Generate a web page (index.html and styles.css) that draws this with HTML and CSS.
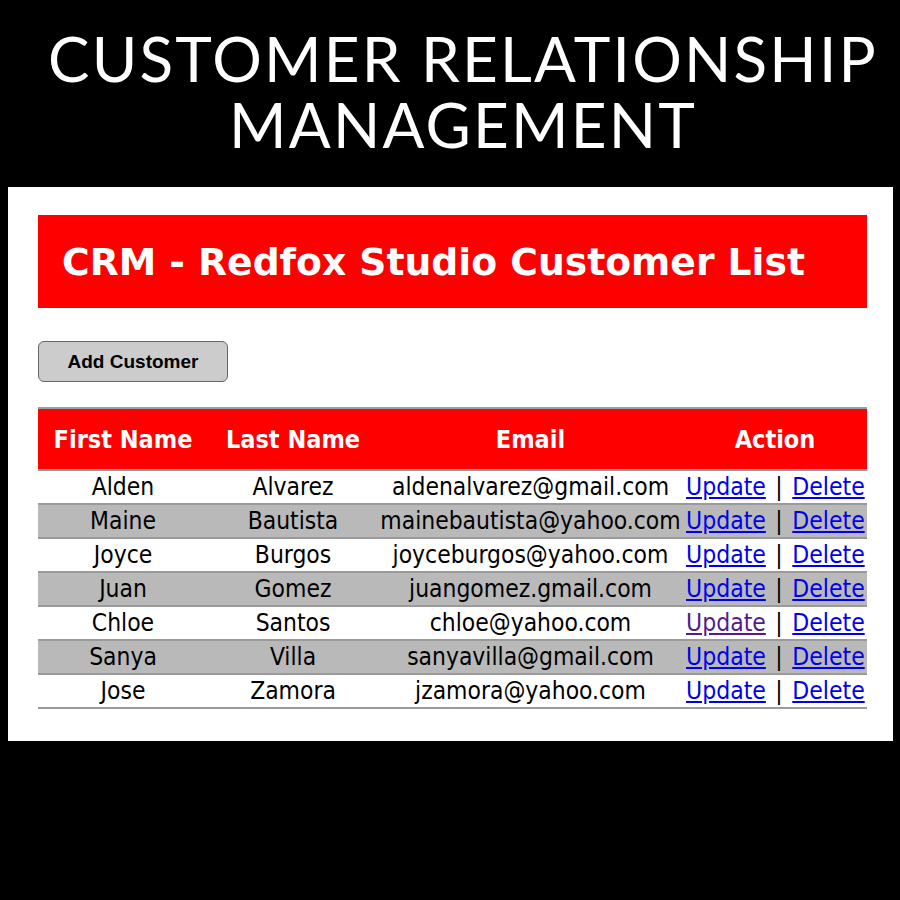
FILE: index.html
```html
<!DOCTYPE html>
<html>
<head>
<meta charset="utf-8">
<link rel="stylesheet" href="styles.css">
</head>
<body>
<div class="page">
  <h1 class="hero"><span class="hero-line">CUSTOMER RELATIONSHIP</span><span class="hero-line">MANAGEMENT</span></h1>
  <div class="panel">
    <div class="banner"><h2>CRM - Redfox Studio Customer List</h2></div>
    <button class="add-btn">Add Customer</button>
    <table class="list">
      <colgroup>
        <col class="c1"><col class="c2"><col class="c3"><col class="c4">
      </colgroup>
      <thead>
        <tr><th>First Name</th><th>Last Name</th><th>Email</th><th>Action</th></tr>
      </thead>
      <tbody>
        <tr><td>Alden</td><td>Alvarez</td><td>aldenalvarez@gmail.com</td><td class="act"><a href="#u1">Update</a> | <a href="#d1">Delete</a></td></tr>
        <tr class="alt"><td>Maine</td><td>Bautista</td><td>mainebautista@yahoo.com</td><td class="act"><a href="#u2">Update</a> | <a href="#d2">Delete</a></td></tr>
        <tr><td>Joyce</td><td>Burgos</td><td>joyceburgos@yahoo.com</td><td class="act"><a href="#u3">Update</a> | <a href="#d3">Delete</a></td></tr>
        <tr class="alt"><td>Juan</td><td>Gomez</td><td>juangomez.gmail.com</td><td class="act"><a href="#u4">Update</a> | <a href="#d4">Delete</a></td></tr>
        <tr><td>Chloe</td><td>Santos</td><td>chloe@yahoo.com</td><td class="act"><a class="visited" href="#u5">Update</a> | <a href="#d5">Delete</a></td></tr>
        <tr class="alt"><td>Sanya</td><td>Villa</td><td>sanyavilla@gmail.com</td><td class="act"><a href="#u6">Update</a> | <a href="#d6">Delete</a></td></tr>
        <tr><td>Jose</td><td>Zamora</td><td>jzamora@yahoo.com</td><td class="act"><a href="#u7">Update</a> | <a href="#d7">Delete</a></td></tr>
      </tbody>
    </table>
  </div>
</div>
</body>
</html>
```

FILE: styles.css
```css
html, body {
  margin: 0;
  padding: 0;
  background: #000;
}
.page {
  width: 900px;
  height: 900px;
  background: #000;
  overflow: hidden;
}
.hero {
  margin: 0;
  padding: 25px 0 0 26px;
  height: 160px;
  box-sizing: border-box;
  display: flex;
  flex-direction: column;
  align-items: center;
  color: #fff;
  font-family: Lato, "Open Sans", sans-serif;
  font-weight: 400;
  font-size: 62px;
  letter-spacing: 2.2px;
  white-space: nowrap;
}
.hero-line {
  display: block;
  height: 66px;
  line-height: 66px;
}
.panel {
  margin: 27px 0 0 8px;
  width: 885px;
  height: 554px;
  background: #fff;
  box-sizing: border-box;
  padding: 28px 26px 0 30px;
}
.banner {
  background: #ff0000;
  height: 93px;
  display: flex;
  align-items: center;
  padding-left: 24px;
}
.banner h2 {
  margin: 0;
  color: #fff;
  font-family: "DejaVu Sans", Verdana, sans-serif;
  font-weight: 700;
  font-size: 37.7px;
  white-space: nowrap;
}
.add-btn {
  display: block;
  margin-top: 33px;
  width: 190px;
  height: 41px;
  background: #cccccc;
  border: 1px solid #666;
  border-radius: 6px;
  font-family: "Liberation Sans", Arial, sans-serif;
  font-weight: 700;
  font-size: 19px;
  color: #000;
  padding: 0;
}
.list {
  margin-top: 25px;
  width: 829px;
  border-collapse: collapse;
  table-layout: fixed;
  font-family: "DejaVu Sans Condensed", Tahoma, sans-serif;
}
.c1 { width: 170px; }
.c2 { width: 170px; }
.c3 { width: 305px; }
.c4 { width: 184px; }
.list thead tr {
  background: #ff0000;
  border-top: 2px solid #9aa0a3;
  border-bottom: 2px solid #8c9aa0;
}
.list th {
  height: 60px;
  color: #fff;
  font-weight: 700;
  font-size: 25px;
  text-align: center;
  padding: 0;
  white-space: nowrap;
}
.list td {
  height: 32px;
  padding: 0;
  font-size: 24.4px;
  line-height: 28px;
  color: #000;
  text-align: center;
  white-space: nowrap;
  border-bottom: 2px solid #9a9a9a;
}
.list tr.alt td {
  background: #b9b9b9;
}
.list td.act {
  text-align: left;
  padding-left: 3px;
  font-size: 24.5px;
  word-spacing: 2.5px;
}
.list a {
  color: #0000ee;
  text-decoration: underline;
}
.list a.visited {
  color: #551a8b;
}
```
